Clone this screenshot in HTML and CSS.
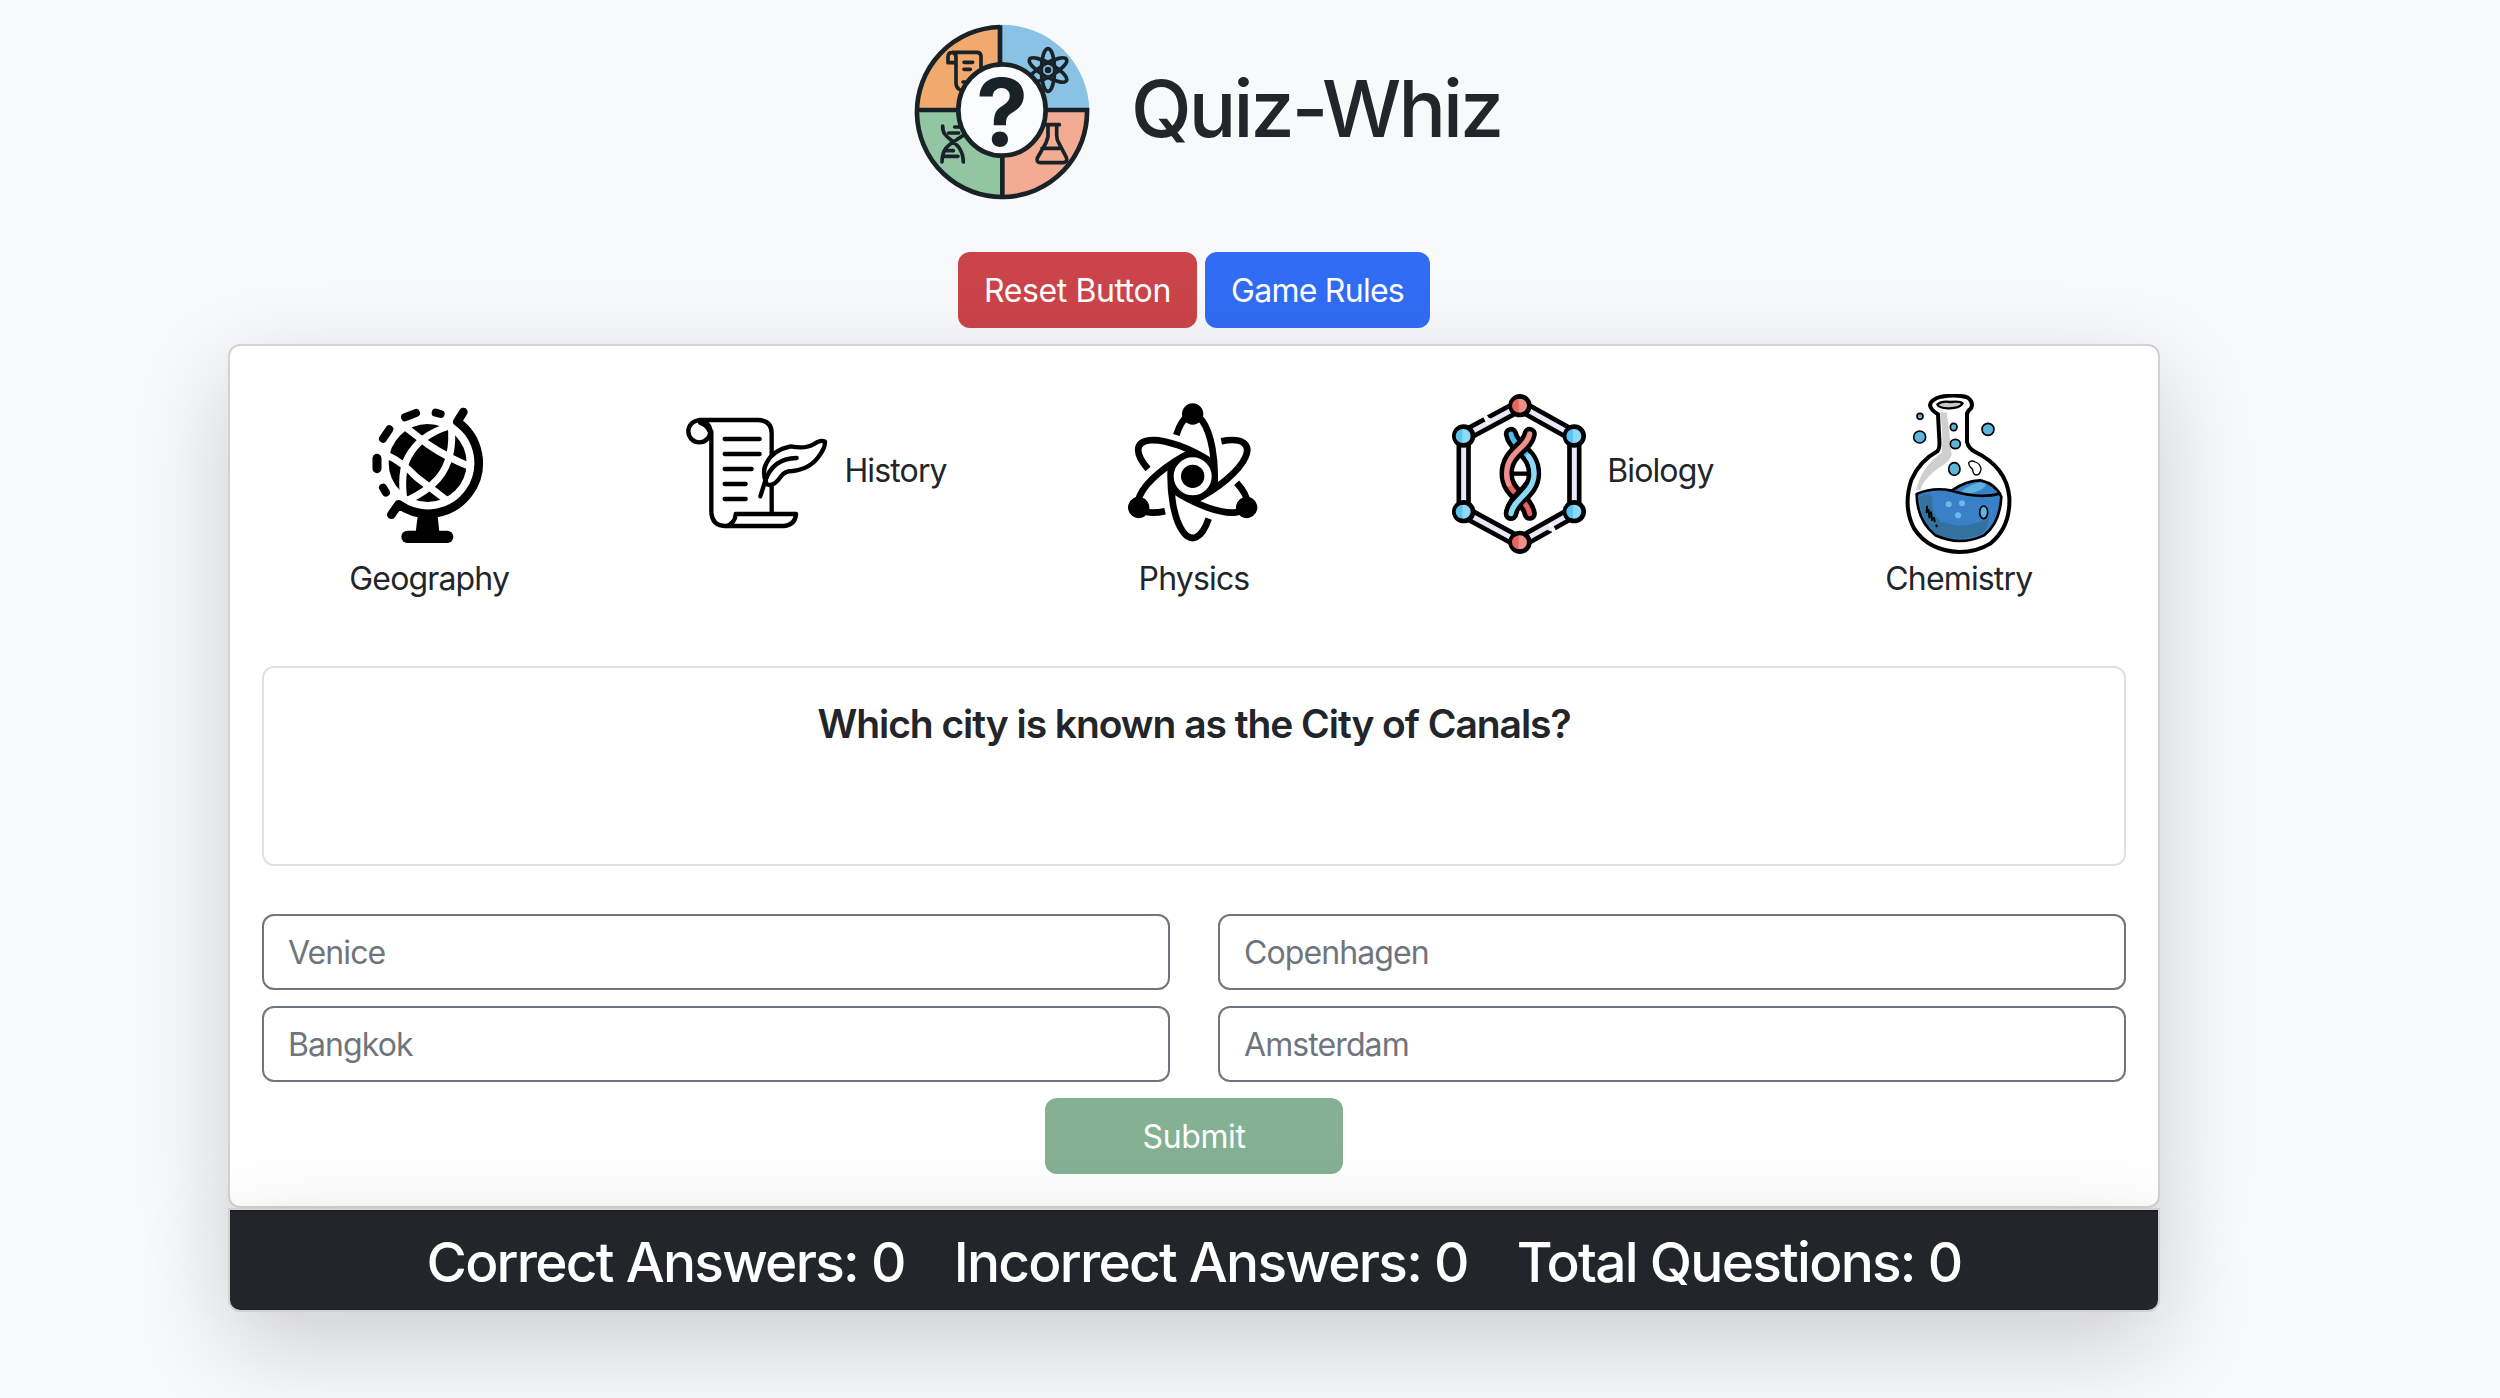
FILE: index.html
```html
<!DOCTYPE html>
<html lang="en">
<head>
<meta charset="utf-8">
<title>Quiz-Whiz</title>
<link rel="stylesheet" href="styles.css">
</head>
<body>
<main class="page">
  <header class="brand">
    <svg class="brand-logo" viewBox="0 0 540 540" aria-hidden="true">
      <path fill="#f2a96e" d="M270 270V14A256 256 0 0 0 14 264V270z"/>
      <path fill="#89c2e4" d="M264 270V8A262 262 0 0 1 532 264V270z"/>
      <path fill="#92c5a2" d="M270 264H14A256 256 0 0 0 270 526z"/>
      <path fill="#f3ac93" d="M270 264H526A256 256 0 0 1 270 526z"/>
      <g fill="none" stroke="#192327" stroke-width="14">
        <path d="M264 15A255 255 0 1 0 525 264H15M264 10V270M271 270V525"/>
      </g>
      <g fill="none" stroke="#192327" stroke-width="11" stroke-linecap="round" stroke-linejoin="round">
        <path d="M132 122H108V105Q108 91 121 91H196Q207 92 207 104V140M121 91Q132 93 132 106V185Q133 198 142 202M156 121H182M156 142H175M153 180H163"/>
        <g>
          <ellipse cx="408" cy="144" rx="20" ry="64"/>
          <ellipse cx="408" cy="144" rx="20" ry="64" transform="rotate(60 408 144)"/>
          <ellipse cx="408" cy="144" rx="20" ry="64" transform="rotate(-60 408 144)"/>
        </g>
        <path d="M92 312C90 360 152 350 154 420M154 340C120 365 90 370 90 420M128 315H142M110 333H140M100 386H124M95 403H138"/>
        <path d="M398 308H442M408 308V345Q404 362 392 380L376 408Q372 422 386 422H454Q468 420 463 406L440 362Q434 352 434 340V308M390 379H448"/>
      </g>
      <circle cx="408" cy="144" r="10" fill="#192327"/>
      <ellipse cx="270" cy="264" rx="131" ry="137" fill="#fbfcfe" stroke="#192327" stroke-width="14"/>
      <text class="logo-mark" x="270" y="371" text-anchor="middle">?</text>
    </svg>
    <h1 class="brand-title">Quiz-Whiz</h1>
  </header>

  <nav class="actions">
    <button class="btn btn-danger" type="button">Reset Button</button>
    <button class="btn btn-primary" type="button">Game Rules</button>
  </nav>

  <section class="card quiz">
    <div class="categories">
      <div class="category stacked">
        <svg class="cat-icon" viewBox="57 42 480 480" aria-hidden="true">
          <circle cx="293" cy="249" r="117"/>
          <g fill="none" stroke="#fff" stroke-width="21">
            <path d="M168 224Q215 245 260 292L352 362M222 138L292 192Q350 232 425 262M358 138Q270 165 235 230Q210 275 222 365M363 130Q375 235 325 295Q290 335 230 362"/>
          </g>
          <g fill="none" stroke="#000" stroke-linecap="round" stroke-linejoin="round">
            <path stroke-width="26" d="M400 96L382 125A152 152 0 0 1 206 373L184 404"/>
            <path stroke-width="24" d="M225 112L258 99M317 98L332 102M159 176L178 148M159 323L168 338"/>
            <path stroke-width="27" d="M141 235V266"/>
          </g>
          <path d="M264 400H322L328 456H257z"/>
          <rect x="214" y="452" width="156" height="37" rx="18"/>
        </svg>
        <span class="cat-name">Geography</span>
      </div>
      <div class="category inline">
        <svg class="cat-icon" viewBox="16 12 480 480" aria-hidden="true">
          <g fill="none" stroke="#000" stroke-width="13" stroke-linecap="round" stroke-linejoin="round">
            <path d="M86 90H264Q303 92 303 130V370M122 124V368Q125 407 162 408H340Q374 404 376 372H195Q194 400 166 408"/>
            <circle cx="86" cy="124" r="33"/>
            <path d="M88 99Q108 104 116 124" stroke-width="12"/>
            <path d="M162 147H267M162 192H267M162 237H243M162 282H225M162 327H225"/>
            <path fill="#fff" d="M287 280Q273 245 287 220Q306 180 360 169Q405 178 430 162Q450 148 463 155Q464 172 448 194Q420 238 365 243Q343 243 332 258Q313 285 298 285Q290 285 287 280z"/>
            <path d="M269 319L283 275Q305 205 378 204"/>
          </g>
        </svg>
        <span class="cat-name">History</span>
      </div>
      <div class="category stacked">
        <svg class="cat-icon" viewBox="10 12 480 480" aria-hidden="true">
          <defs>
            <g id="orbit">
              <path d="M197 135A66 184 0 0 1 311 291M181 227A66 184 0 0 0 294 386" fill="none" stroke="#000" stroke-width="20"/>
              <circle cx="246" cy="72" r="32"/>
            </g>
          </defs>
          <use href="#orbit"/>
          <use href="#orbit" transform="rotate(120 246 259)"/>
          <use href="#orbit" transform="rotate(240 246 259)"/>
          <circle cx="246" cy="259" r="63" fill="#fff" stroke="#000" stroke-width="12"/>
          <circle cx="246" cy="259" r="35"/>
        </svg>
        <span class="cat-name">Physics</span>
      </div>
      <div class="category inline">
        <svg class="cat-icon" viewBox="27 42 480 480" aria-hidden="true">
          <path d="M270 77L433 168V395L270 487L101 395V168z" fill="none" stroke="#000" stroke-width="43"/>
          <path d="M270 77L433 168V395L270 487L101 395V168z" fill="none" stroke="#ebe7fb" stroke-width="15"/>
          <path d="M165 108L178 131M360 433L373 456" stroke="#fff" stroke-width="13"/>
          <path d="M173 118L183 124M354 444L366 448" stroke="#ebe7fb" stroke-width="13"/>
          <g stroke="#000" stroke-width="14">
            <g fill="#f08e8b"><circle cx="270" cy="77" r="28"/><circle cx="270" cy="487" r="28"/></g>
            <g fill="#8bdaf8"><circle cx="433" cy="168" r="28"/><circle cx="433" cy="395" r="28"/><circle cx="101" cy="168" r="28"/><circle cx="101" cy="395" r="28"/></g>
          </g>
          <path d="M266 57A20 20 0 0 0 266 97zM266 467A20 20 0 0 0 266 507z" fill="#e96560"/>
          <path d="M429 148A20 20 0 0 0 429 188zM429 375A20 20 0 0 0 429 415zM97 148A20 20 0 0 0 97 188zM97 375A20 20 0 0 0 97 415z" fill="#5cc3f0"/>
          <path d="M240 281H300" stroke="#000" stroke-width="13"/>
          <g fill="none" stroke-linecap="round">
            <path d="M243 162C250 205 312 215 312 281C312 340 250 355 243 401" stroke="#000" stroke-width="43"/>
            <path d="M243 162C250 205 312 215 312 281" stroke="#4bbaee" stroke-width="15"/>
            <path d="M299 162C292 205 230 215 230 281C230 340 292 355 299 401" stroke="#000" stroke-width="43"/>
            <path d="M230 281C230 340 292 355 299 401" stroke="#e8625e" stroke-width="15"/>
            <path d="M299 162C292 205 230 215 230 281Q230 300 236 312" stroke="#ef8e8c" stroke-width="16"/>
            <path d="M298 322C278 350 248 365 243 401" stroke="#000" stroke-width="43"/>
            <path d="M296 230Q312 252 312 281C312 340 250 355 243 401" stroke="#8bdaf8" stroke-width="16"/>
          </g>
        </svg>
        <span class="cat-name">Biology</span>
      </div>
      <div class="category stacked">
        <svg class="cat-icon" viewBox="57 42 480 480" aria-hidden="true">
          <g stroke="#000" stroke-linecap="round" stroke-linejoin="round">
            <path fill="#fff" stroke-width="12" d="M234 103Q212 90 210 76Q212 58 244 50Q290 42 322 52Q342 66 333 85Q320 94 321 106V186Q326 206 346 216Q440 262 448 352Q452 440 392 490Q350 516 298 516Q205 512 162 445Q128 380 154 300Q180 242 232 214Q240 205 238 180z"/>
            <path fill="#cfcfcf" stroke="none" d="M240 97H260Q270 170 275 225Q270 245 230 268Q185 305 182 330H168Q185 260 245 218Q250 160 240 97z"/>
            <path fill="#c9c9c9" stroke-width="7" d="M232 74Q245 62 270 66Q300 62 308 70Q300 86 264 85Q236 84 232 74z"/>
            <path fill="#3a80c8" stroke="none" d="M170 342Q220 320 275 332Q320 300 362 301Q408 312 424 350Q420 430 372 466Q300 500 226 466Q170 420 170 342z"/>
            <path fill="#33719f" stroke="none" d="M190 345Q215 335 218 360Q212 405 245 425L290 437Q340 440 388 412Q385 450 360 464Q300 485 240 468Q180 430 178 350z"/>
            <path fill="#5eb0de" stroke="none" d="M306 332Q345 305 374 306Q385 315 365 328Q335 345 306 341z"/>
            <path fill="none" stroke-width="8" d="M170 342Q220 320 275 332Q320 300 362 301Q408 312 424 350Q420 430 372 466Q300 500 226 466Q170 420 170 342zM275 332Q335 350 380 347Q405 346 420 340"/>
            <path fill="none" stroke-width="6" d="M201 380L200 397M206 390L208 412M213 397L216 420M222 414L224 424M229 436L230 439"/>
            <g fill="#5fb4dd" stroke-width="5">
              <ellipse cx="180" cy="109" rx="9" ry="9"/>
              <circle cx="179" cy="171" r="18"/>
              <circle cx="384" cy="148" r="18"/>
              <ellipse cx="281" cy="141" rx="10" ry="11"/>
              <ellipse cx="286" cy="192" rx="15" ry="14"/>
              <ellipse cx="283" cy="267" rx="17" ry="19"/>
              <ellipse cx="371" cy="397" rx="12" ry="19"/>
            </g>
            <path fill="#fff" stroke-width="4" d="M326 248Q334 239 346 246Q362 252 363 268Q360 286 347 285Q339 282 338 268Q326 258 326 248z"/>
          </g>
          <g fill="#6bbbe6"><circle cx="266" cy="373" r="9"/><circle cx="306" cy="370" r="9"/><circle cx="294" cy="406" r="9"/></g>
        </svg>
        <span class="cat-name">Chemistry</span>
      </div>
    </div>

    <div class="question"><h5 class="question-text">Which city is known as the City of Canals?</h5></div>

    <div class="answers">
      <button class="answer" type="button">Venice</button>
      <button class="answer" type="button">Copenhagen</button>
      <button class="answer" type="button">Bangkok</button>
      <button class="answer" type="button">Amsterdam</button>
    </div>
    <button class="btn btn-submit" type="button">Submit</button>
  </section>

  <footer class="card score">
    <div class="score-bar">
      <span>Correct Answers: 0</span>
      <span>Incorrect Answers: 0</span>
      <span>Total Questions: 0</span>
    </div>
  </footer>
</main>
</body>
</html>
```
FILE: styles.css
```css
* { box-sizing: border-box; }

body {
  margin: 0;
  min-height: 1398px;
  background: #f8f9fb;
  color: #222529;
  font-family: Inter, "Liberation Sans", sans-serif;
  font-size: 32px;
  font-weight: 440;
  line-height: 48px;
  letter-spacing: -.85px;
  overflow: hidden;
}

.page { width: 2388px; padding-top: 22px; }

.brand {
  display: flex;
  height: 180px;
  padding-left: 912px;
}
.brand-logo { width: 180px; height: 180px; flex: none; }
.logo-mark {
  font-family: Inter, sans-serif;
  font-weight: 700;
  font-size: 280px;
  letter-spacing: 0;
  fill: #192327;
}
.brand-title {
  margin: 38px 0 0 39px;
  font-size: 79px;
  line-height: 96px;
  font-weight: 540;
  letter-spacing: -2.9px;
  white-space: nowrap;
}

.actions {
  display: flex;
  justify-content: center;
  gap: 8px;
  margin-top: 50px;
}
.btn {
  height: 76px;
  padding: 2px 0 0;
  border: 0;
  border-radius: 12px;
  color: #fff;
  font: inherit;
  letter-spacing: -.4px;
  white-space: nowrap;
}
.btn-danger { width: 239px; background: #cb444a; }
.btn-primary { width: 225px; background: #316cf4; letter-spacing: -.75px; }

.card {
  position: relative;
  width: 1932px;
  margin: 0 auto;
  border: 2px solid rgba(0, 0, 0, .175);
  border-radius: 12px;
  background-color: #fff;
  box-shadow: 0 32px 96px rgba(0, 0, 0, .175);
}

.quiz {
  height: 864px;
  margin-top: 16px;
  padding: 48px 32px 32px;
}

.categories {
  display: grid;
  grid-template-columns: repeat(5, 1fr);
  height: 272px;
  margin: 0 -24px;
}
.category { display: flex; height: 209px; justify-content: center; }
.stacked { flex-direction: column; align-items: center; gap: 1px; }
.inline { height: 160px; align-items: center; gap: 8px; }
.inline .cat-name { padding-bottom: 6px; }
.cat-icon { width: 160px; height: 160px; flex: none; }
.cat-name { white-space: nowrap; }

.question {
  height: 200px;
  padding: 32px;
  border: 2px solid #dee2e6;
  border-radius: 12px;
  text-align: center;
}
.question-text {
  margin: 0;
  font-size: 39px;
  line-height: 48px;
  font-weight: 570;
  letter-spacing: -1.05px;
}

.answers {
  display: grid;
  grid-template-columns: 1fr 1fr;
  gap: 16px 48px;
  margin-top: 48px;
}
.answer {
  height: 76px;
  padding: 2px 24px 0;
  border: 2px solid #6e757c;
  border-radius: 12px;
  background: #fff;
  color: #6e757c;
  font: inherit;
  letter-spacing: -.9px;
  text-align: left;
}

.btn-submit { display: block; width: 298px; margin: 16px auto 0; background: #84b093; }

.score { height: 104px; border-radius: 0 0 12px 12px; }
.score-bar {
  display: flex;
  justify-content: center;
  gap: 49px;
  height: 100px;
  border-top: 2px solid #1d2023;
  border-radius: 0 0 10px 10px;
  background: #222529;
  color: #fff;
  font-size: 55px;
  line-height: 101px;
  font-weight: 530;
  letter-spacing: -1.75px;
  white-space: nowrap;
}
```
